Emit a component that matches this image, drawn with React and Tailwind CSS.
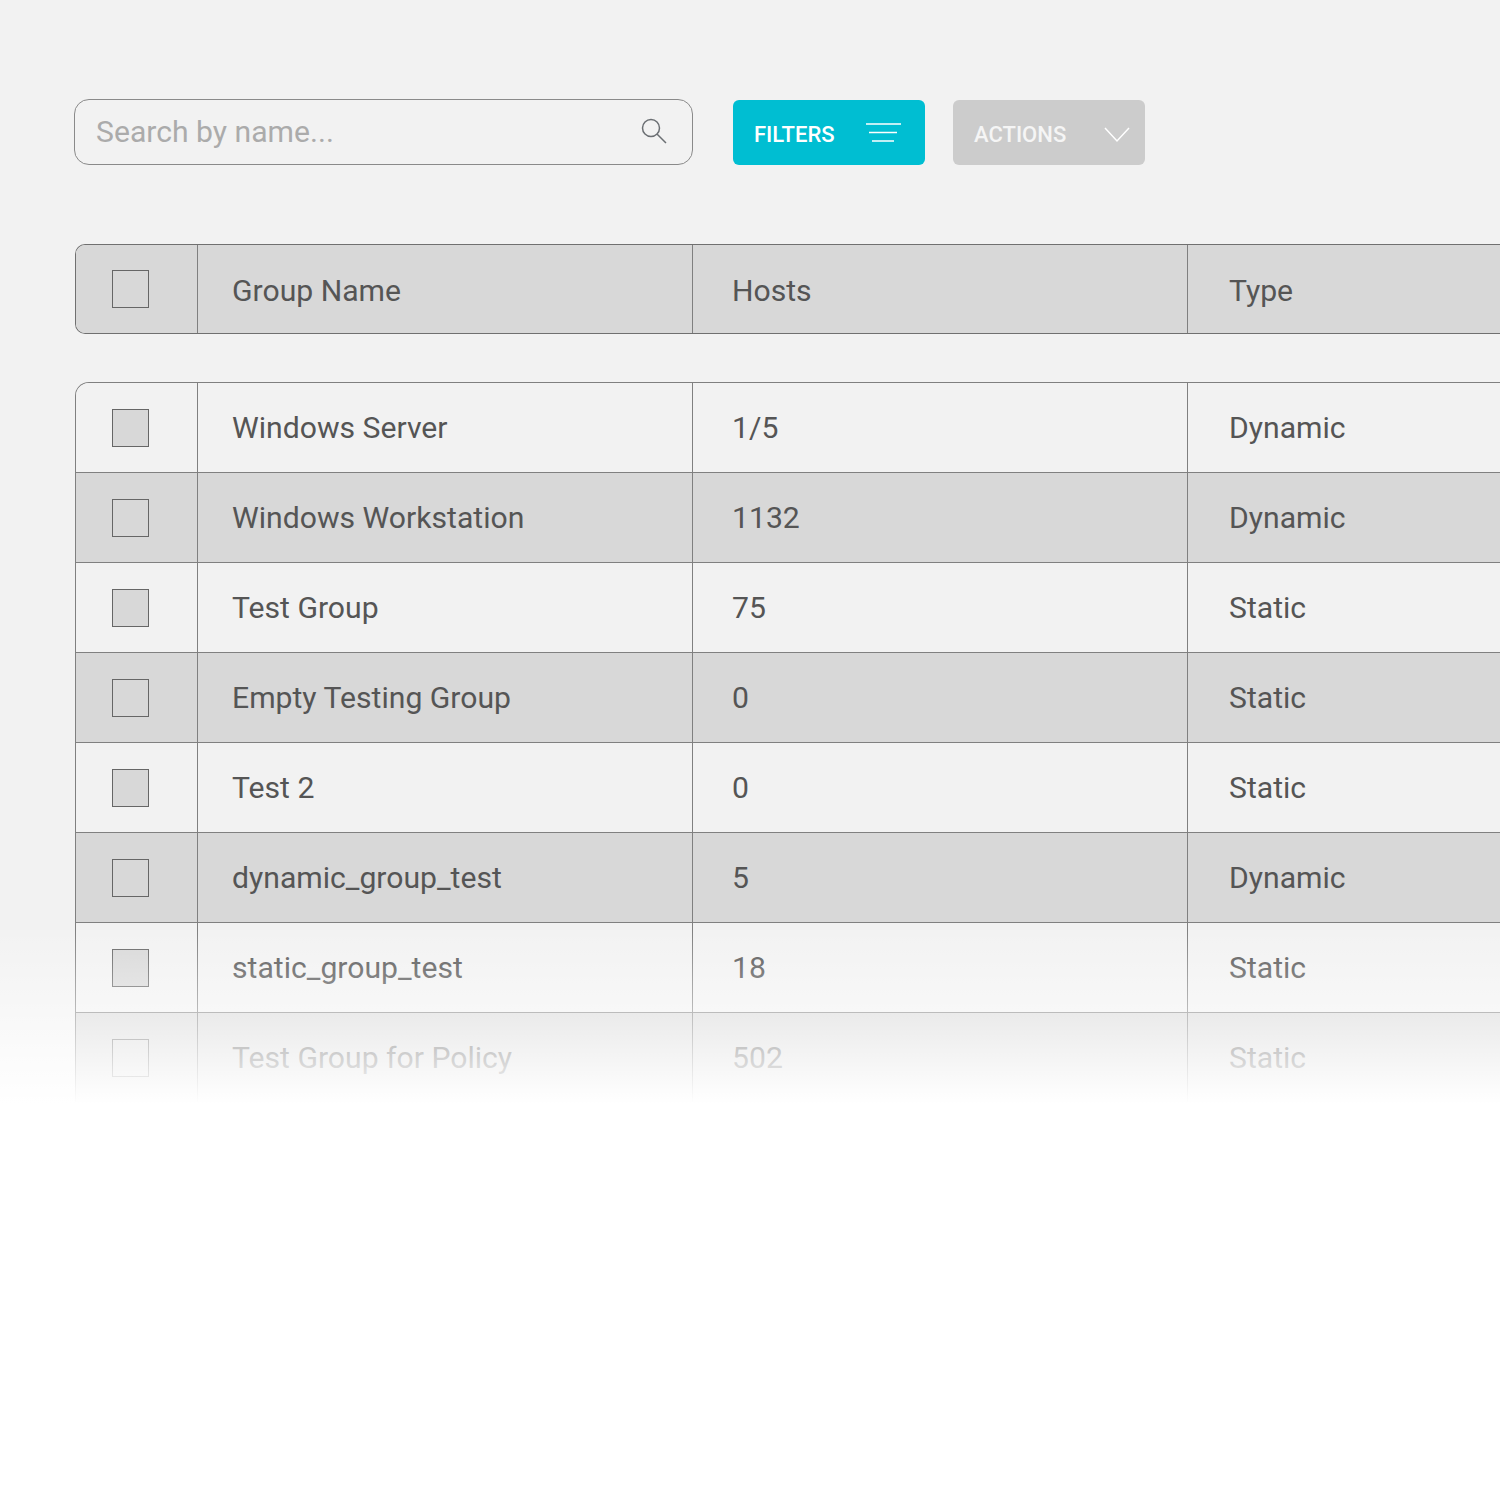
import React from "react";

const rows = [
  ["Windows Server", "1/5", "Dynamic"],
  ["Windows Workstation", "1132", "Dynamic"],
  ["Test Group", "75", "Static"],
  ["Empty Testing Group", "0", "Static"],
  ["Test 2", "0", "Static"],
  ["dynamic_group_test", "5", "Dynamic"],
  ["static_group_test", "18", "Static"],
  ["Test Group for Policy", "502", "Static"],
];

function Row({ cells, dark, first, header }) {
  const height = header ? "h-[88px]" : first ? "h-[89px]" : "h-[90px]";
  const textPad = header ? "pt-[4px]" : "";
  return (
    <div className={`flex ${height} ${dark ? "bg-[#d8d8d8]" : "bg-[#f2f2f2]"} ${first ? "" : "border-t border-[#808080]"}`}>
      <div className="w-[122px] shrink-0 flex items-center pl-[36px] border-r border-[#808080]">
        <div className={`w-[37px] h-[38px] border border-[#666666] ${dark ? "" : "bg-[#d8d8d8]"}`}></div>
      </div>
      <div className={`w-[495px] shrink-0 flex items-center pl-[34px] border-r border-[#808080] ${textPad}`}>{cells[0]}</div>
      <div className={`w-[495px] shrink-0 flex items-center pl-[39px] border-r border-[#808080] ${textPad}`}>{cells[1]}</div>
      <div className={`flex-1 flex items-center pl-[41px] ${textPad}`}>{cells[2]}</div>
    </div>
  );
}

export default function App() {
  return (
    <div className="relative h-[1500px] overflow-hidden bg-white text-[30.15px] text-[#555555] font-['Roboto',sans-serif]">
      <div className="bg-[#f2f2f2] h-[1103px] pt-[99px] pl-[74px]">
        <div className="flex items-start">
          <div className="w-[619px] h-[66px] rounded-[15px] border border-[#8a8a8a] flex items-center justify-between pl-[21px] pr-[24px]">
            <span className="text-[#ababab]">Search by name...</span>
            <svg width="28" height="28" viewBox="0 0 28 28" fill="none" stroke="#6b6f73" strokeWidth="1.5" className="mb-[3px]">
              <circle cx="11" cy="11" r="8.5" />
              <path d="M17 17l9 9" />
            </svg>
          </div>
          <button className="ml-[40px] mt-[1px] w-[192px] h-[65px] rounded-[6px] bg-[#00bed2] text-white text-[22px] font-medium flex items-center justify-between pl-[21px] pr-[24px]">
            <span className="mt-[3px]">FILTERS</span>
            <svg width="35" height="20" viewBox="0 0 35 20" fill="none" stroke="#ffffff" strokeWidth="1.5">
              <path d="M0 1h35M3 9.5h28M6 18h22" />
            </svg>
          </button>
          <button className="ml-[28px] mt-[1px] w-[192px] h-[65px] rounded-[6px] bg-[#cccccc] text-[#f5f5f5] text-[22px] font-medium flex items-center justify-between pl-[21px] pr-[15px]">
            <span className="mt-[3px]">ACTIONS</span>
            <svg width="26" height="16" viewBox="0 0 26 16" fill="none" stroke="#ffffff" strokeWidth="1.5" className="mt-[4px]">
              <path d="M1 1l12 13L25 1" />
            </svg>
          </button>
        </div>

        <div className="mt-[79px] ml-[1px] border border-r-0 border-[#707070] rounded-l-[10px] overflow-hidden">
          <Row cells={["Group Name", "Hosts", "Type"]} dark first header />
        </div>

        <div className="mt-[48px] ml-[1px] border-l border-t border-[#808080] rounded-tl-[14px] overflow-hidden">
          {rows.map((r, i) => (
            <Row key={r[0]} cells={r} dark={i % 2 === 1} first={i === 0} />
          ))}
        </div>
      </div>
      <div className="absolute left-0 right-0 top-[930px] h-[174px] bg-gradient-to-b from-[#ffffff00] to-white"></div>
    </div>
  );
}
